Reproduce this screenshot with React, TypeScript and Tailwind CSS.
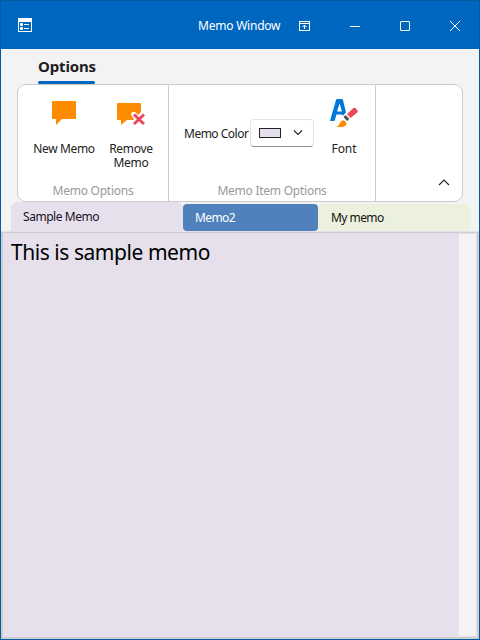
import React from "react";

function TitleBar() {
  return (
    <header className="flex h-12 shrink-0 items-center bg-[#0067c0] text-white">
      <svg className="ml-[17px]" width="14" height="14" viewBox="0 0 14 14" shapeRendering="crispEdges">
        <path fill="white" fillRule="evenodd" d="M0 0h14v14H0zM1 4v9h12V4z" />
        <path fill="white" d="M2 6h1V5h1v1h1v1H4v1H3V7H2zM2 10h1V9h1v1h1v1H4v1H3v-1H2zM6 6h5v1H6zM6 10h5v1H6z" />
        <path fill="white" d="M2 5h3v3H2zM2 9h3v3H2z" opacity=".75" />
      </svg>
      <span className="ml-[166px] mt-0.5 w-[83px] whitespace-nowrap text-[12px] leading-4 tracking-[-0.22px]">Memo Window</span>
      <svg className="ml-[18px] mt-px" width="11" height="10" viewBox="0 0 11 10" fill="none" stroke="white" shapeRendering="crispEdges">
        <path d="M.5 .5h10v9H.5zM.5 2.5h10M5.5 8V4" />
        <path d="M3.5 6l2-2 2 2" shapeRendering="auto" />
      </svg>
      <svg className="ml-10 mt-px" width="10" height="10" viewBox="0 0 10 10" stroke="white">
        <path d="M0 5.5h10" />
      </svg>
      <svg className="ml-10 mt-px" width="10" height="10" viewBox="0 0 10 10" stroke="white" fill="none">
        <rect x=".5" y=".5" width="9" height="9" rx=".5" />
      </svg>
      <svg className="ml-10 mt-px" width="10" height="10" viewBox="0 0 10 10" stroke="white">
        <path d="M0 0l10 10M10 0L0 10" />
      </svg>
    </header>
  );
}

function GroupLabel({ children }: { children: React.ReactNode }) {
  return <div className="mb-0.5 mt-auto text-center leading-4 tracking-[-0.25px] text-[#999999]">{children}</div>;
}

function Ribbon() {
  return (
    <section className="mx-4 flex h-[118px] shrink-0 overflow-hidden rounded-[9px] border border-[#cdcdcd] bg-white text-[12px] text-[#222]">
      <div className="flex w-[151px] flex-col border-r border-[#cdcdcd]">
        <div className="flex">
          <button className="ml-[9px] flex w-[74px] flex-col items-center pt-4">
            <svg width="24" height="24" viewBox="0 0 24 24">
              <path fill="#ff8c00" d="M1 0h22q1 0 1 1v16q0 1-1 1H10l-6 6v-6H1q-1 0-1-1V1q0-1 1-1" />
            </svg>
            <span className="mt-4 whitespace-nowrap leading-4 tracking-[-0.35px]">New Memo</span>
          </button>
          <button className="flex w-[60px] flex-col items-center pt-[18px]">
            <svg width="28" height="23" viewBox="0 0 28 23">
              <path fill="#ff8c00" d="M1 0h22q1 0 1 1v8l-3 3-3-3q-3-1-4 2 0 2 3 5l-1 1h-6l-6 5v-5H1q-1 0-1-1V1q0-1 1-1" />
              <path d="M17 11.5l10 9.5M27 11.5L17 21" stroke="#e9475b" strokeWidth="3" />
            </svg>
            <span className="mt-4 flex flex-col text-center leading-[14px] tracking-[-0.28px]">
              <span>Remove</span>
              <span>Memo</span>
            </span>
          </button>
        </div>
        <GroupLabel>Memo Options</GroupLabel>
      </div>
      <div className="flex w-[207px] flex-col border-r border-[#cdcdcd]">
        <div className="flex">
          <label className="ml-[15px] mt-[41px] w-[66px] whitespace-nowrap leading-4 tracking-[-0.5px]">Memo Color</label>
          <div className="mt-[34px] flex h-7 w-16 items-center rounded border border-[#e2e2e2] border-b-[#929292] pl-2">
            <span className="h-[10px] w-[22px] border border-[#222] bg-[#e5e0ec]" />
            <svg className="ml-3" width="10" height="6" viewBox="0 0 10 6" fill="none" stroke="#222" strokeWidth="1.1">
              <path d="M1 .5l4 4 4-4" />
            </svg>
          </div>
          <button className="ml-[14px] flex w-8 flex-col items-center pt-[14px]">
            <svg width="28" height="28" viewBox="0 0 28 28">
              <path fill="#0078d7" fillRule="evenodd" d="M0 22L6 1q.3-1 1.300-1h4.400q1 0 1.300 1l3 12.500-3 3-1.500-1H6.500L4.500 22zM7 12.500h5L9.600 4.500z" />
              <path fill="#e9475b" d="M17 15l6.500-6q1-.7 2 0l2 2.500q.7 1-.3 2L20.500 19z" />
              <path fill="#4d4d4d" d="M13.500 18l2.200-2 3.600 4-2.200 2z" />
              <path fill="#ff8c00" d="M6 28q3-1 4-4 2-4 5-2 3 3 0 5-3 2-9 1" />
            </svg>
            <span className="mt-[14px] leading-4 tracking-[-0.1px]">Font</span>
          </button>
        </div>
        <GroupLabel>Memo Item Options</GroupLabel>
      </div>
      <div className="flex flex-1 items-end justify-end pb-[15px] pr-3">
        <svg width="12" height="7" viewBox="0 0 12 7" fill="none" stroke="#222" strokeWidth="1.1">
          <path d="M1 6l5-5 5 5" />
        </svg>
      </div>
    </section>
  );
}

export default function App() {
  return (
    <main className="flex h-[640px] w-[480px] flex-col overflow-hidden border border-[#005ba5] bg-[#f3f3f3] font-['Noto_Sans',sans-serif]">
      <TitleBar />
      <nav className="flex h-[35px] shrink-0 pl-[37px]">
        <div className="flex w-[58px] flex-col">
          <span className="mt-[5px] h-[27px] whitespace-nowrap text-[15px] font-bold leading-6 tracking-[-0.15px] text-[#202020]">Options</span>
          <span className="h-[3px] w-[57px] rounded-sm bg-[#0067c0]" />
        </div>
      </nav>
      <Ribbon />
      <div className="flex h-[29px] shrink-0 items-end pl-[10px] text-[12px] leading-[27px]">
        <div className="h-[29px] w-[172px] rounded-t-md bg-[#e5e0ec] pl-3 pt-px tracking-[-0.45px] text-[#1d1028]">Sample Memo</div>
        <div className="h-[27px] w-[135px] rounded bg-[#4f81bd] pl-3 tracking-[-0.6px] text-white">Memo2</div>
        <div className="h-[27px] w-[152px] rounded-t-md bg-[#ebf1dd] pl-[13px] tracking-[-0.55px] text-[#111]">My memo</div>
      </div>
      <div className="h-px shrink-0 bg-[#e5e0ec]" />
      <section className="flex min-h-0 flex-1 border-2 border-t border-[#cdcdcd] bg-[#e5e0ec] pb-px pr-px pt-px">
        <div className="flex-1 pl-2 pt-[3px] text-[21px] leading-[30px] tracking-[-0.45px] text-black">This is sample memo</div>
        <div className="w-[17px] bg-[#f3f3f3]" />
      </section>
    </main>
  );
}
